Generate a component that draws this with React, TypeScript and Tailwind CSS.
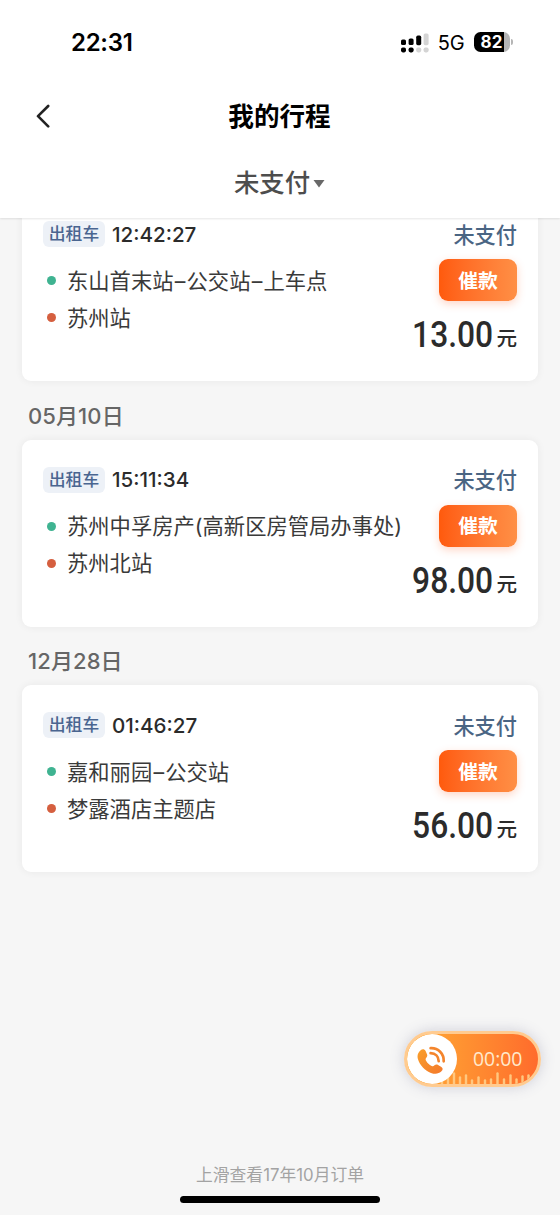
interface Trip {
    time: string;
    from: string;
    to: string;
    price: string;
}

const firstTrip: Trip = { time: '12:42:27', from: '东山首末站–公交站–上车点', to: '苏州站', price: '13.00' };

const groups: { date: string; trip: Trip }[] = [
    { date: '05月10日', trip: { time: '15:11:34', from: '苏州中孚房产(高新区房管局办事处)', to: '苏州北站', price: '98.00' } },
    { date: '12月28日', trip: { time: '01:46:27', from: '嘉和丽园–公交站', to: '梦露酒店主题店', price: '56.00' } },
];

// [x, height] of each tick in the call widget
const ticks = [
    [35, 5], [41, 8], [47, 11], [53, 7], [59, 9], [65, 4], [71.5, 7], [78, 4],
    [84, 5], [90.5, 11], [97, 5], [103.5, 9], [109.5, 5], [115.5, 8], [121.5, 9], [127.5, 10],
];

function StatusBar() {
    return (
        <div className="h-[84px] pl-[71px] pr-[47px] flex items-center justify-between text-black">
            <span className="pt-px text-[24px] font-semibold tracking-[-0.3px]">22:31</span>
            <div className="flex items-center">
                <svg width="29" height="21" viewBox="0 0 29 21">
                    <g fill="#000">
                        <rect x="0" y="7.6" width="5" height="5.4" rx="1.6" />
                        <rect x="7.6" y="6.4" width="5" height="6.6" rx="1.6" />
                        <rect x="15.2" y="3.6" width="5" height="9.6" rx="1.6" />
                        <rect x="0" y="15.4" width="5" height="5" rx="1.8" />
                        <rect x="7.6" y="15.4" width="5" height="5" rx="1.8" />
                    </g>
                    <g fill="#d4d4d4">
                        <rect x="22.6" y="1.4" width="5" height="11.8" rx="1.6" />
                        <rect x="15.2" y="15.4" width="5" height="5" rx="1.8" />
                        <rect x="22.6" y="15.4" width="5" height="5" rx="1.8" />
                    </g>
                </svg>
                <span className="ml-[8px] pt-[2px] text-[20px] tracking-[-0.2px]">5G</span>
                <div className="ml-[9px] w-[36px] h-[20px] rounded-[6.5px] bg-linear-to-r from-black from-83% to-[#b5b5b5] to-83% flex items-center justify-center">
                    <span className="text-[17px] leading-none font-bold text-white">82</span>
                </div>
                <div className="ml-[1.5px] w-[2px] h-[6px] rounded-r-full bg-[#b5b5b5]" />
            </div>
        </div>
    );
}

function Place({ name }: { name: string }) {
    return (
        <span className="pt-[2px]">
            {name.split('–').map((part, i) => (
                <span key={i}>
                    {i > 0 && <span className="mx-[1.2px]">–</span>}
                    {part}
                </span>
            ))}
        </span>
    );
}

function TripCard({ trip }: { trip: Trip }) {
    return (
        <div className="h-[187px] mx-[22px] pl-[21px] pr-[21px] pt-[27px] bg-white rounded-[9px] shadow-[0_0_8px_rgba(0,0,0,0.06)]">
            <div className="h-[26px] flex items-center">
                <span className="w-[62px] h-[26px] pt-[2px] rounded-[6px] bg-[#edf1f7] text-[#4a6590] text-[16.8px] font-medium flex items-center justify-center">出租车</span>
                <span className="ml-[7px] pt-[2px] text-[20.6px] font-medium text-[#2b2b2b]">{trip.time}</span>
                <span className="ml-auto pt-[3px] text-[21.2px] font-medium text-[#4a6583]">未支付</span>
            </div>
            <div className="flex justify-between">
                <div className="min-w-0 flex-1 pt-[15px] text-[21.3px] text-[#3a3a3a] whitespace-nowrap">
                    <div className="h-[37px] flex items-center">
                        <span className="shrink-0 ml-[4px] mr-[11px] size-[9px] rounded-full bg-[#3fb391]" />
                        <Place name={trip.from} />
                    </div>
                    <div className="h-[37px] flex items-center">
                        <span className="shrink-0 ml-[4px] mr-[11px] size-[9px] rounded-full bg-[#d55f3f]" />
                        <Place name={trip.to} />
                    </div>
                </div>
                <div className="w-[78px] shrink-0 pt-[12px] flex flex-col items-end">
                    <button className="w-[78px] h-[42px] pt-[3px] rounded-[9px] bg-linear-to-r from-[#ff5a0c] to-[#ff8f45] shadow-[0_3px_8px_rgba(255,90,30,0.25)] text-white text-[19.8px] font-bold">催款</button>
                    <div className="mt-[14px] h-[40px] flex items-baseline text-[#2b2b2b] leading-[40px] whitespace-nowrap">
                        <span className="font-[Roboto] text-[36.5px] font-medium origin-right scale-x-[0.87]">{trip.price}</span>
                        <span className="relative -top-px ml-[3px] text-[20.6px] font-medium">元</span>
                    </div>
                </div>
            </div>
        </div>
    );
}

function CallWidget() {
    return (
        <div className="absolute left-[404px] top-[1031px] w-[137px] h-[56px] rounded-full border-[3px] border-[#ffcb90] bg-linear-to-r from-[#ffac35] to-[#ff6b2c] shadow-[0_0_14px_rgba(90,90,130,0.25)] overflow-hidden">
            <svg className="absolute left-0 bottom-0" width="131" height="12" viewBox="0 0 131 12" stroke="#ffc880" strokeWidth="2.4" strokeLinecap="round">
                {ticks.map(([x, h]) => (
                    <line key={x} x1={x} x2={x} y1={12.5 - h} y2="13" />
                ))}
            </svg>
            <div className="relative size-[50px] rounded-full bg-white flex items-center justify-center">
                <svg width="30" height="31" viewBox="0 0 30 31">
                    <defs>
                        <linearGradient id="phone" x1="0" y1="0" x2="1" y2="1">
                            <stop offset="0" stopColor="#f99f2c" />
                            <stop offset="1" stopColor="#f4792b" />
                        </linearGradient>
                    </defs>
                    <path fill="url(#phone)" d="M3.4 6.4C5.200 4.600 7.500 4.800 8.600 6.900L10 10.200C10.600 11.700 10.300 12.700 9.300 13.700 8.400 14.700 8.400 15.500 9.100 16.800 10.400 19.200 12.200 20.900 14.600 22 15.800 22.500 16.600 22.300 17.500 21.300 18.500 20.300 19.700 20.100 21.100 20.900L24.400 22.900C26.200 24.100 26 26 24.200 27.600 21.500 30 18 30.300 14 28.900 8.200 26.700 2.600 21 .9 14.900-.1 11.400 1 8.400 3.400 6.400z" />
                    <g fill="none" stroke="#f4852d" strokeWidth="2.7" strokeLinecap="round">
                        <path d="M13.600 4.200C21.300 3.800 27 9.700 26.700 17.300" />
                        <path d="M13.600 9.200C18.400 9.200 21.600 12.500 21.700 17.200" />
                    </g>
                </svg>
            </div>
            <span className="absolute left-[66px] top-[11px] font-['Open_Sans'] text-[19.4px] leading-[28px] text-[#ffe9cc]">00:00</span>
        </div>
    );
}

export default function App() {
    return (
        <div className="relative w-[560px] h-[1215px] overflow-hidden bg-[#f6f6f6] flex flex-col font-[Inter,'Noto_Sans_CJK_SC',sans-serif]">
            <header className="relative z-10 h-[218px] shrink-0 bg-white shadow-[0_1px_2px_rgba(0,0,0,0.1)]">
                <StatusBar />
                <div className="h-[63px] px-[36px] grid grid-cols-[1fr_auto_1fr] items-center">
                    <svg width="14" height="24" viewBox="0 0 14 24" fill="none" stroke="#222" strokeWidth="2.6" strokeLinecap="round" strokeLinejoin="round">
                        <path d="M12.2 2L2 12.2 12.2 22.4" />
                    </svg>
                    <h1 className="-ml-px pt-[3px] text-[25.6px] font-bold text-black">我的行程</h1>
                </div>
                <div className="h-[71px] pt-[2px] flex items-center justify-center text-[25.4px] font-medium text-[#4d4d4d]">
                    未支付
                    <svg className="ml-[3px] mr-px" width="12" height="8" viewBox="0 0 12 8" fill="#686868">
                        <path d="M0.500 0h11L6 7.500z" />
                    </svg>
                </div>
            </header>

            <main className="flex-1 min-h-0 overflow-hidden">
                <div className="-mt-[24px]">
                    <TripCard trip={firstTrip} />
                </div>
                {groups.map((g) => (
                    <section key={g.date}>
                        <h2 className="h-[58.5px] pt-[11px] pl-[28px] flex items-center text-[22px] leading-none text-[#666] font-medium tracking-[0.1px]">{g.date}</h2>
                        <TripCard trip={g.trip} />
                    </section>
                ))}
            </main>

            <CallWidget />

            <footer className="h-[53px] shrink-0 flex flex-col items-center text-[#a3a3a3]">
                <p className="text-[16.8px] leading-[26px]">上滑查看17年10月订单</p>
                <div className="mt-[8px] w-[200px] h-[7px] rounded-full bg-black" />
            </footer>
        </div>
    );
}
